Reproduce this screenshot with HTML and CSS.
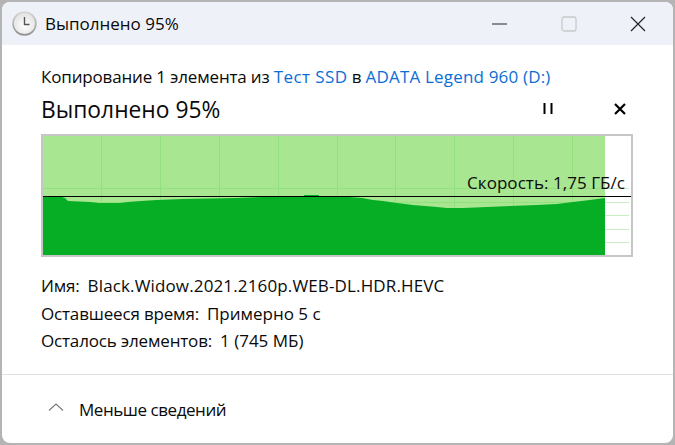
FILE: index.html
```html
<!DOCTYPE html>
<html lang="ru">

<head>
  <meta charset="UTF-8" />
  <title>Выполнено 95%</title>
  <link rel="stylesheet" href="styles.css">
</head>

<body>
  <div class="window">
    <div class="titlebar">
      <svg class="clock" width="26" height="26" viewBox="0 0 26 26">
        <defs>
          <linearGradient id="rim" x1="0" y1="0" x2="0" y2="1">
            <stop offset="0" stop-color="#d8d8d8" />
            <stop offset="1" stop-color="#8e8e8e" />
          </linearGradient>
          <radialGradient id="face" cx="0.5" cy="0.6" r="0.6">
            <stop offset="0" stop-color="#ffffff" />
            <stop offset="1" stop-color="#e2e2e2" />
          </radialGradient>
        </defs>
        <circle cx="12.5" cy="12.5" r="12.2" fill="url(#rim)" />
        <circle cx="12.5" cy="12.5" r="10.6" fill="url(#face)" />
        <path d="M12.5 6V13.5H17.5" fill="none" stroke="#555" stroke-width="1.4" />
      </svg>
      <span class="title">Выполнено 95%</span>
      <div class="win-buttons">
        <svg width="16" height="16" viewBox="0 0 16 16"><path d="M0 8H15" stroke="#222" stroke-width="1" /></svg>
        <svg width="16" height="16" viewBox="0 0 16 16"><rect x="1" y="1" width="14" height="14" rx="2" fill="none" stroke="#c8c8c8" stroke-width="1.3" /></svg>
        <svg width="16" height="16" viewBox="0 0 16 16"><path d="M1 1L15 15M15 1L1 15" stroke="#222" stroke-width="1.2" /></svg>
      </div>
    </div>

    <div class="content">
      <p class="copying">Копирование 1 элемента из <a href="#" class="source">Тест SSD</a> в <a href="#" class="dest">ADATA Legend 960 (D:)</a></p>
      <div class="heading-row">
        <h1>Выполнено 95%</h1>
        <div class="actions">
          <svg width="12" height="12" viewBox="0 0 12 12"><path d="M2.5 0V11M9.5 0V11" stroke="#000" stroke-width="2" /></svg>
          <svg width="12" height="12" viewBox="0 0 12 12"><path d="M1 1L11 11M11 1L1 11" stroke="#000" stroke-width="2.2" /></svg>
        </div>
      </div>

      <div class="graph">
        <svg width="588" height="119" viewBox="0 0 588 119">
          <rect width="562" height="119" fill="#a9e691" />
          <g stroke="#93e07f" stroke-width="1">
            <path d="M58.5 0V119M117.5 0V119M176.5 0V119M235.5 0V119M294.5 0V119M352.5 0V119M411.5 0V119M470.5 0V119M529.5 0V119" />
            <path d="M0 52.5H562M0 66.5H562" />
          </g>
          <path d="M562 52.5H586M562 66.5H586M562 79.5H586M562 93.5H586M562 106.5H586" stroke="#c9eec4" stroke-width="1" />
          <path d="M0 61H19L22 62L25 65L47 66L56 67H77L85 66L98 65L114 64L140 63L193 62L221 61H261V59H276V61H306L319 62L330 64L340 65L354 67L370 69L394 71L404 72H420L444 71L467 70L494 69L514 68L530 66L547 64L562 62V119H0Z" fill="#05ae25" />
          <path d="M0 60.5H588" stroke="#000" stroke-width="1" />
        </svg>
        <span class="speed">Скорость: 1,75 ГБ/с</span>
      </div>

      <dl class="details">
        <div><dt>Имя:</dt><dd class="file-name">Black.Widow.2021.2160p.WEB-DL.HDR.HEVC</dd></div>
        <div><dt>Оставшееся время:</dt><dd>Примерно 5 с</dd></div>
        <div><dt>Осталось элементов:</dt><dd>1 (745 МБ)</dd></div>
      </dl>
    </div>

    <div class="footer">
      <svg class="chevron" width="16" height="8" viewBox="0 0 16 8"><path d="M1 7.5L8 1L15 7.5" fill="none" stroke="#777" stroke-width="1.1" /></svg>
      <span class="less">Меньше сведений</span>
    </div>
  </div>
</body>

</html>
```

FILE: styles.css
```css
html, body {
  height: 100%;
}
body {
  margin: 0;
  background: #b4b4b4;
  font-family: "Open Sans", "Noto Sans", sans-serif;
  font-size: 17px;
  color: #0a0a0a;
  overflow: hidden;
}
.window {
  margin: 2px;
  height: 441px;
  background: #fff;
  border-radius: 8px;
  display: flex;
  flex-direction: column;
  overflow: hidden;
}
.titlebar {
  height: 43px;
  flex: none;
  background: #eef2f8;
  display: flex;
  align-items: center;
  padding-left: 10px;
  gap: 7px;
}
.title {
  font-size: 17px;
}
.win-buttons {
  margin-left: auto;
  margin-right: 27px;
  display: flex;
  gap: 53px;
  align-items: center;
}
.content {
  flex: 1;
  padding: 0 40px 0 39px;
}
.copying {
  margin: 21px 0 0;
  line-height: 22px;
  letter-spacing: -0.17px;
}
a {
  color: #0a6ed6;
  text-decoration: none;
}
.source {
  letter-spacing: 0.4px;
}
.dest {
  letter-spacing: 0.18px;
}
.heading-row {
  display: flex;
  align-items: center;
  height: 32px;
  margin-top: 5px;
}
h1 {
  margin: 0;
  font-size: 22.8px;
  font-weight: 400;
}
.actions {
  margin-left: auto;
  margin-right: 7px;
  display: flex;
  gap: 60px;
}
.graph {
  position: relative;
  width: 588px;
  height: 119px;
  border: 2px solid #c6c6c6;
  margin-top: 9px;
}
.graph svg {
  display: block;
}
.speed {
  position: absolute;
  right: 6px;
  top: 37px;
  line-height: 20px;
  letter-spacing: 0.05px;
}
.details {
  margin: 15px 0 0;
}
.details div {
  display: flex;
  gap: 8px;
  height: 27.5px;
  line-height: 27.5px;
}
.details dt {
  letter-spacing: -0.17px;
}
.details dd {
  margin: 0;
}
.details .file-name {
  letter-spacing: 0.14px;
}
.footer {
  flex: none;
  height: 68px;
  border-top: 1px solid #e2e2e2;
  display: flex;
  align-items: center;
  padding-left: 46px;
  gap: 15px;
}
.chevron {
  margin-bottom: 4px;
}
.less {
  letter-spacing: -0.45px;
}
```
